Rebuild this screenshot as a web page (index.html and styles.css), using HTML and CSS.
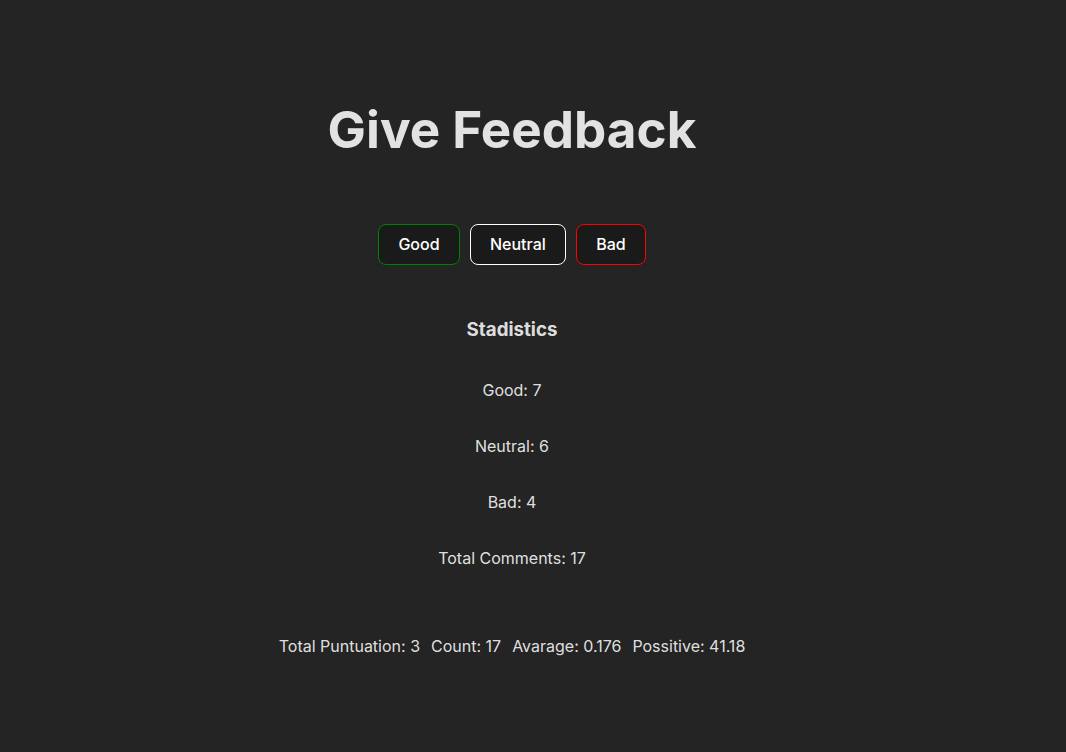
FILE: index.html
```html
<!DOCTYPE html>
<html lang="en">
<head>
<meta charset="UTF-8">
<title>Give Feedback</title>
<link rel="stylesheet" href="styles.css">
</head>
<body>
<main class="app">
  <h1 class="title">Give Feedback</h1>
  <div class="actions">
    <button class="btn btn-good">Good</button>
    <button class="btn btn-neutral">Neutral</button>
    <button class="btn btn-bad">Bad</button>
  </div>
  <h3 class="stats-title">Stadistics</h3>
  <div class="stats">
    <p class="stat">Good: 7</p>
    <p class="stat">Neutral: 6</p>
    <p class="stat">Bad: 4</p>
    <p class="stat">Total Comments: 17</p>
  </div>
  <div class="summary">
    <span>Total Puntuation: 3</span>
    <span>Count: 17</span>
    <span>Avarage: 0.176</span>
    <span>Possitive: 41.18</span>
  </div>
</main>
</body>
</html>
```

FILE: styles.css
```css
html, body {
  margin: 0;
  padding: 0;
}
body {
  background: #242424;
  color: rgba(255, 255, 255, 0.87);
  font-family: Inter, "Noto Sans", sans-serif;
  font-size: 16px;
  line-height: 1.5;
  min-height: 100vh;
}
.app {
  display: flex;
  flex-direction: column;
  align-items: center;
  padding: 101px 42px 0 0;
  text-align: center;
}
.title {
  margin: 0;
  font-size: 51.2px;
  line-height: 1.1;
  font-weight: 700;
}
.actions {
  display: flex;
  gap: 10px;
  margin-top: 67px;
}
.btn {
  font-family: inherit;
  font-size: 16px;
  font-weight: 500;
  line-height: 19px;
  padding: 10px 19.2px 10px;
  border-radius: 8px;
  background: #1a1a1a;
  color: #fff;
  border: 1px solid transparent;
  cursor: pointer;
}
.btn-good { border-color: green; }
.btn-neutral { border-color: white; }
.btn-bad { border-color: red; }
.stats-title {
  margin: 51px 0 0;
  font-size: 18.72px;
  font-weight: 700;
  line-height: 28px;
}
.stats {
  display: flex;
  flex-direction: column;
  align-items: center;
  gap: 32px;
  margin-top: 34px;
}
.stat {
  margin: 0;
  line-height: 24px;
}
.summary {
  display: flex;
  gap: 11px;
  margin-top: 64px;
}
```
